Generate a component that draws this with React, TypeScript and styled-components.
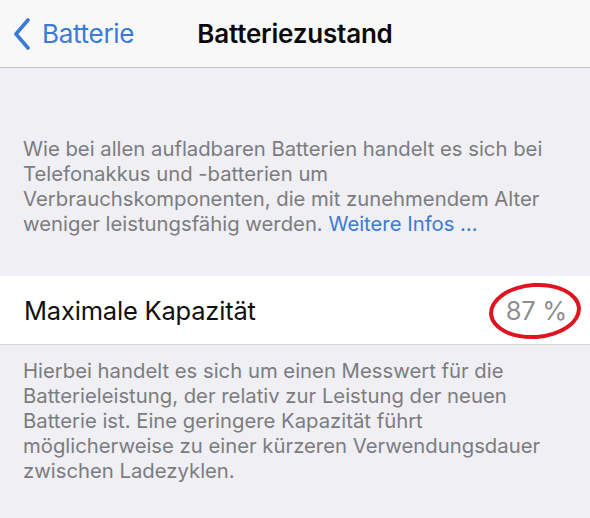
import * as React from "react";
import styled, { createGlobalStyle } from "styled-components";

const GlobalStyle = createGlobalStyle`
    html, body {
        margin: 0;
        padding: 0;
        background: #efeff4;
        font-family: Inter, "Noto Sans", "Liberation Sans", sans-serif;
        -webkit-font-smoothing: antialiased;
    }
`;

const Page = styled.div`
    width: 590px;
    height: 518px;
    overflow: hidden;
    background: #efeff4;
`;

const NavBar = styled.div`
    height: 67px;
    background: #f8f8f8;
    border-bottom: 1px solid #c4c4c8;
    display: grid;
    grid-template-columns: 1fr auto 1fr;
    align-items: center;
`;

const BackButton = styled.div`
    display: flex;
    align-items: center;
    gap: 11px;
    padding-left: 13px;
    color: #3a7bd5;
    font-size: 26px;
    letter-spacing: -0.3px;
`;

const Title = styled.div`
    font-size: 26px;
    font-weight: 600;
    color: #0a0a0a;
    letter-spacing: -0.2px;
`;

const Footnote = styled.p<{ $top: number; $bottom: number }>`
    margin: 0;
    padding: ${p => p.$top}px 10px ${p => p.$bottom}px 23px;
    color: #7c7c80;
    font-size: 20.3px;
    line-height: 25px;
    letter-spacing: 0;
    white-space: nowrap;
`;

const Link = styled.span`
    color: #3a7bd5;
`;

const Row = styled.div`
    position: relative;
    height: 68px;
    background: #ffffff;
    border-bottom: 1px solid #d6d6da;
    display: flex;
    align-items: center;
    justify-content: space-between;
    padding: 0 23px 0 24px;
`;

const RowLabel = styled.span`
    font-size: 25.5px;
    color: #111;
    letter-spacing: -0.2px;
`;

const RowValue = styled.span`
    font-size: 25.5px;
    color: #8e8e93;
    letter-spacing: -0.3px;
`;

const Marker = styled.div`
    position: absolute;
    left: 489px;
    top: 7px;
    width: 92px;
    height: 56px;
    border: 4px solid #e0141e;
    border-radius: 50%;
    box-sizing: border-box;
    transform: rotate(-4deg);
`;

const Chevron = () => (
    <svg width="18" height="32" viewBox="0 0 18 32">
        <path d="M15 2 L3 16 L15 30" fill="none" stroke="#3a7bd5" strokeWidth="3.6" strokeLinecap="round" strokeLinejoin="round"/>
    </svg>
);

const App = () => {
    return (
        <Page>
            <GlobalStyle/>
            <NavBar>
                <BackButton>
                    <Chevron/>
                    <span>Batterie</span>
                </BackButton>
                <Title>Batteriezustand</Title>
                <div/>
            </NavBar>
            <Footnote $top={68} $bottom={40}>
                Wie bei allen aufladbaren Batterien handelt es sich bei<br/>
                Telefonakkus und -batterien um<br/>
                Verbrauchskomponenten, die mit zunehmendem Alter<br/>
                weniger leistungsfähig werden. <Link>Weitere Infos …</Link>
            </Footnote>
            <Row>
                <RowLabel>Maximale Kapazität</RowLabel>
                <RowValue>87 %</RowValue>
                <Marker/>
            </Row>
            <Footnote $top={13} $bottom={0}>
                Hierbei handelt es sich um einen Messwert für die<br/>
                Batterieleistung, der relativ zur Leistung der neuen<br/>
                Batterie ist. Eine geringere Kapazität führt<br/>
                möglicherweise zu einer kürzeren Verwendungsdauer<br/>
                zwischen Ladezyklen.
            </Footnote>
        </Page>
    )
};

export default App;
